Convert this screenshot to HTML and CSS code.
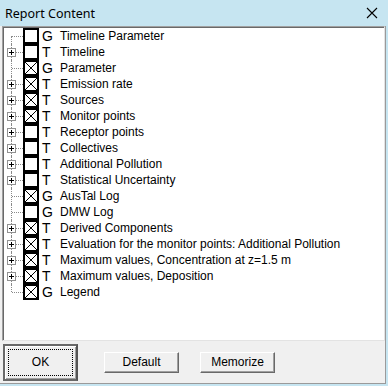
FILE: index.html
```html
<!DOCTYPE html>
<html lang="en">
<head>
    <meta charset="UTF-8">
    <title>Report Content</title>
    <link rel="stylesheet" href="styles.css">
</head>
<body>
    <div class="window">
        <div class="titlebar">
            <span class="title">Report Content</span>
            <svg class="close" width="12" height="12" viewBox="0 0 12 12">
                <path d="M1 1 L11 11 M11 1 L1 11" stroke="#000" stroke-width="1.1"/>
            </svg>
        </div>

        <div class="body">
            <div class="tree">
                <div class="row first"><span class="branch"></span><span class="check"></span><span class="kind">G</span><span class="label">Timeline Parameter</span></div>
                <div class="row"><span class="branch"><i class="plus"></i></span><span class="check"></span><span class="kind">T</span><span class="label">Timeline</span></div>
                <div class="row"><span class="branch"></span><span class="check on"></span><span class="kind">G</span><span class="label">Parameter</span></div>
                <div class="row"><span class="branch"><i class="plus"></i></span><span class="check on"></span><span class="kind">T</span><span class="label">Emission rate</span></div>
                <div class="row"><span class="branch"><i class="plus"></i></span><span class="check on"></span><span class="kind">T</span><span class="label">Sources</span></div>
                <div class="row"><span class="branch"><i class="plus"></i></span><span class="check on"></span><span class="kind">T</span><span class="label">Monitor points</span></div>
                <div class="row"><span class="branch"><i class="plus"></i></span><span class="check"></span><span class="kind">T</span><span class="label">Receptor points</span></div>
                <div class="row"><span class="branch"><i class="plus"></i></span><span class="check"></span><span class="kind">T</span><span class="label">Collectives</span></div>
                <div class="row"><span class="branch"><i class="plus"></i></span><span class="check"></span><span class="kind">T</span><span class="label">Additional Pollution</span></div>
                <div class="row"><span class="branch"><i class="plus"></i></span><span class="check"></span><span class="kind">T</span><span class="label">Statistical Uncertainty</span></div>
                <div class="row"><span class="branch"></span><span class="check on"></span><span class="kind">G</span><span class="label">AusTal Log</span></div>
                <div class="row"><span class="branch"></span><span class="check"></span><span class="kind">G</span><span class="label">DMW Log</span></div>
                <div class="row"><span class="branch"><i class="plus"></i></span><span class="check on"></span><span class="kind">T</span><span class="label">Derived Components</span></div>
                <div class="row"><span class="branch"><i class="plus"></i></span><span class="check on"></span><span class="kind">T</span><span class="label">Evaluation for the monitor points: Additional Pollution</span></div>
                <div class="row"><span class="branch"><i class="plus"></i></span><span class="check on"></span><span class="kind">T</span><span class="label">Maximum values, Concentration at z=1.5 m</span></div>
                <div class="row"><span class="branch"><i class="plus"></i></span><span class="check on"></span><span class="kind">T</span><span class="label">Maximum values, Deposition</span></div>
                <div class="row last"><span class="branch"></span><span class="check on"></span><span class="kind">G</span><span class="label">Legend</span></div>
            </div>

            <div class="buttons">
                <button class="btn default-btn"><span class="focus">OK</span></button>
                <button class="btn btn-default">Default</button>
                <button class="btn btn-memo">Memorize</button>
            </div>
        </div>
    </div>
</body>
</html>
```

FILE: styles.css
```css
html, body {
    margin: 0;
    padding: 0;
}
body {
    background: #c6e5f1;
    font-family: "Liberation Sans", Arial, sans-serif;
}
.window {
    width: 388px;
    height: 386px;
    display: flex;
    flex-direction: column;
}
.titlebar {
    height: 26px;
    flex: none;
    background: #c6e5f1;
    display: flex;
    align-items: center;
    justify-content: space-between;
    padding: 0 10px 0 5px;
}
.title {
    font-family: "Noto Sans", "Open Sans", sans-serif;
    font-size: 12.5px;
    color: #000;
}
.body {
    width: 385px;
    height: 357px;
    background: #f0f0f0;
    border-right: 1px solid #9a9a9a;
    border-bottom: 1px solid #9a9a9a;
    display: flex;
    flex-direction: column;
}

/* tree list */
.tree {
    margin: 0 0 0 2px;
    height: 312px;
    background: #fff;
    border-top: 1px solid #a0a0a0;
    border-left: 1px solid #a0a0a0;
    box-shadow: inset 1px 1px 0 #696969;
    border-right: 1px solid #e3e3e3;
    border-bottom: 1px solid #e3e3e3;
    padding: 1px 0 0 2px;
}
.row {
    height: 16px;
    display: flex;
    align-items: center;
}
.branch {
    position: relative;
    width: 18px;
    height: 16px;
    flex: none;
}
.branch::before {
    content: "";
    position: absolute;
    left: 6px;
    top: 0;
    height: 16px;
    border-left: 1px dotted #8a8a8a;
}
.row.first .branch::before {
    top: 8px;
    height: 8px;
}
.row.last .branch::before {
    height: 8px;
}
.branch::after {
    content: "";
    position: absolute;
    left: 7px;
    top: 8px;
    width: 11px;
    border-top: 1px dotted #8a8a8a;
}
.plus {
    position: absolute;
    left: 2px;
    top: 4px;
    width: 7px;
    height: 7px;
    border: 1px solid #919191;
    background: #fff;
    z-index: 1;
}
.plus::before {
    content: "";
    position: absolute;
    left: 1px;
    top: 3px;
    width: 5px;
    height: 1px;
    background: #000;
}
.plus::after {
    content: "";
    position: absolute;
    left: 3px;
    top: 1px;
    width: 1px;
    height: 5px;
    background: #000;
}
.check {
    width: 12px;
    height: 12px;
    border: 2px solid #000;
    flex: none;
    background: #fff;
}
.check.on {
    background:
        linear-gradient(to top right, transparent calc(50% - 0.6px), #000 50%, transparent calc(50% + 0.6px)),
        linear-gradient(to bottom right, transparent calc(50% - 0.6px), #000 50%, transparent calc(50% + 0.6px)),
        #fff;
}
.kind {
    width: 18px;
    padding-left: 3px;
    font-size: 14px;
    color: #000;
}
.label {
    font-size: 12px;
    color: #000;
    white-space: nowrap;
}

/* buttons */
.buttons {
    flex: 1;
    display: flex;
    align-items: center;
    padding-left: 3px;
}
.btn {
    font-family: "Liberation Sans", Arial, sans-serif;
    font-size: 12px;
    color: #000;
    background: #f0f0f0;
    width: 75px;
    height: 21px;
    border: 1px solid;
    border-color: #fff #696969 #696969 #fff;
    box-shadow: inset -1px -1px 0 #a0a0a0;
    padding: 0;
}
.default-btn {
    height: 37px;
    border: 2px solid #696969;
    border-right-color: #555;
    box-shadow: inset 1px 1px 0 #fff, inset -1px -1px 0 #a0a0a0;
    padding: 3px;
}
.focus {
    display: flex;
    align-items: center;
    justify-content: center;
    height: 100%;
    border: 1px dotted #000;
    box-sizing: border-box;
}
.btn-default {
    margin-left: 26px;
}
.btn-memo {
    margin-left: 21px;
}
```
